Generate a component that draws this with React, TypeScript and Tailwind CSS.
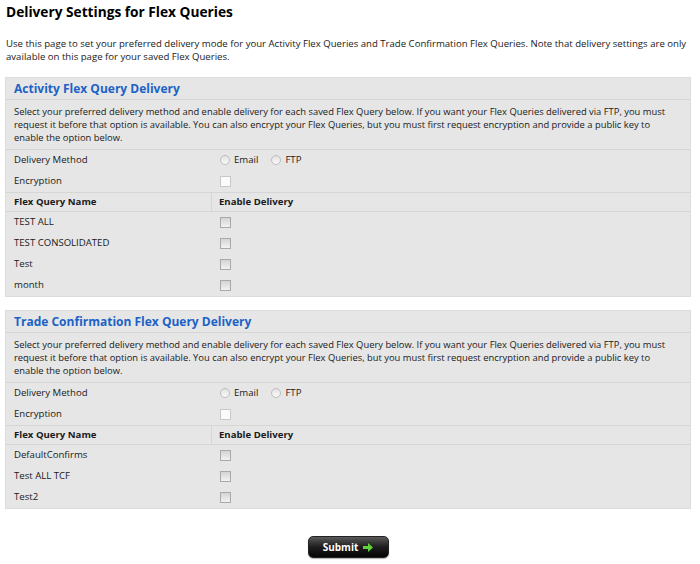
import React from 'react';

const font = { fontFamily: '"Open Sans", "DejaVu Sans", sans-serif' };

const intro =
  'Select your preferred delivery method and enable delivery for each saved Flex Query below. If you want your Flex Queries delivered via FTP, you must request it before that option is available. You can also encrypt your Flex Queries, but you must first request encryption and provide a public key to enable the option below.';

const Radio = ({ label }: { label: string }) => (
  <label className="flex items-center gap-[4px]">
    <span className="h-[10px] w-[10px] rounded-full border border-[#bdbdbd] bg-gradient-to-b from-[#e2e2e2] to-[#fafafa]" />
    <span>{label}</span>
  </label>
);

const Check = ({ light }: { light?: boolean }) => (
  <span
    className={
      light
        ? 'block h-[11px] w-[11px] border border-[#c8c8c8] bg-[#fbfbfb]'
        : 'block h-[11px] w-[11px] border border-[#a9a9a9] bg-gradient-to-b from-[#d4d4d4] to-[#f2f2f2]'
    }
  />
);

const Row = ({ name, children }: { name: string; children: React.ReactNode }) => (
  <div className="grid h-[21px] grid-cols-[206px_1fr] items-center">
    <div className="pl-[8px]">{name}</div>
    <div className="pl-[8px]">{children}</div>
  </div>
);

const Panel = ({ title, queries }: { title: string; queries: string[] }) => (
  <section className="border border-[#dcdcdc] bg-[#e6e6e6]">
    <h2 className="flex h-[22px] items-center border-b border-[#d6d6d6] pl-[8px] text-[12px] font-bold text-[#1c62c6]">
      {title}
    </h2>
    <p className="border-b border-[#d6d6d6] py-[5px] pr-[12px] pl-[8px] text-[9.4px] leading-[13px]">{intro}</p>
    <Row name="Delivery Method">
      <div className="flex items-center gap-[13px]">
        <Radio label="Email" />
        <Radio label="FTP" />
      </div>
    </Row>
    <Row name="Encryption">
      <Check light />
    </Row>
    <div className="grid h-[20px] grid-cols-[206px_1fr] items-center border-y border-[#d6d6d6] font-bold">
      <div className="flex h-full items-center border-r border-[#d6d6d6] pl-[8px]">Flex Query Name</div>
      <div className="pl-[7px]">Enable Delivery</div>
    </div>
    {queries.map((q) => (
      <Row key={q} name={q}>
        <Check />
      </Row>
    ))}
  </section>
);

export default function App() {
  return (
    <div className="min-h-[564px] w-[700px] bg-white px-[5px] pt-[2px] text-[9.6px] text-[#1a1a1a]" style={font}>
      <h1 className="pl-[1px] text-[13.7px] leading-[20px] font-bold text-black">Delivery Settings for Flex Queries</h1>
      <p className="mt-[15px] pl-[1px] pr-[4px] leading-[13px]">
        Use this page to set your preferred delivery mode for your Activity Flex Queries and Trade Confirmation Flex
        Queries. Note that delivery settings are only available on this page for your saved Flex Queries.
      </p>
      <div className="mt-[14px] mr-[4px] flex flex-col gap-[13px]">
        <Panel title="Activity Flex Query Delivery" queries={['TEST ALL', 'TEST CONSOLIDATED', 'Test', 'month']} />
        <Panel title="Trade Confirmation Flex Query Delivery" queries={['DefaultConfirms', 'Test ALL TCF', 'Test2']} />
      </div>
      <div className="mt-[27px] flex justify-center pr-[4px]">
        <button className="flex h-[22px] w-[81px] items-center justify-center gap-[5px] rounded-[5px] border border-[#222] bg-gradient-to-b from-[#5a5a5a] via-[#1e1e1e] to-[#050505] text-[10px] font-bold text-white shadow-[0_1px_1px_rgba(0,0,0,0.3)]">
          Submit
          <svg width="10" height="9" viewBox="0 0 10 9">
            <path d="M0 3h5V0l5 4.5L5 9V6H0z" fill="#5fd13a" />
          </svg>
        </button>
      </div>
    </div>
  );
}
